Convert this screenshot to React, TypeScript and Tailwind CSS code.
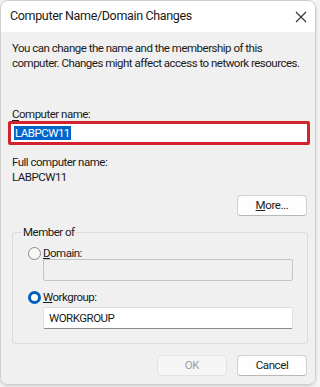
import React from 'react';

const font = { fontFamily: 'Roboto, "Liberation Sans", sans-serif' };

function Radio({ checked }: { checked?: boolean }) {
  return checked ? (
    <span className="w-[13px] h-[13px] rounded-full border-[3.5px] border-[#005fb8] bg-white shrink-0" />
  ) : (
    <span className="w-[13px] h-[13px] rounded-full border border-[#8a8a8a] bg-[#f7f7f7] shrink-0" />
  );
}

function Button({ children, disabled }: { children: React.ReactNode; disabled?: boolean }) {
  return (
    <button
      className={`w-[70px] h-[21px] rounded-[4px] border text-[11.5px] tracking-[-0.4px] leading-none flex items-center justify-center ${
        disabled
          ? 'border-[#e3e3e3] bg-[#f5f5f5] text-[#a0a0a0]'
          : 'border-[#d0d0d0] border-b-[#b8b8b8] bg-[#fdfdfd] text-[#1a1a1a]'
      }`}
    >
      {children}
    </button>
  );
}

export default function App() {
  return (
    <div className="w-[320px] h-[387px] bg-[#f4f4f4] overflow-hidden" style={font}>
      <div className="w-[316px] h-[385px] rounded-[8px] border border-[#cfcfcf] overflow-hidden flex flex-col shadow-[0_1px_3px_rgba(0,0,0,0.18)]">
        {/* Title bar */}
        <div className="h-[31px] bg-white flex items-center justify-between pl-[9px] pr-[7px] shrink-0">
          <span className="text-[12.5px] tracking-[-0.35px] text-[#1a1a1a]">Computer Name/Domain Changes</span>
          <svg width="12" height="12" viewBox="0 0 12 12" className="mr-[1px]">
            <path d="M1 1L11 11M11 1L1 11" stroke="#333" strokeWidth="1.1" />
          </svg>
        </div>

        {/* Body */}
        <div className="flex-1 bg-[#f0f0f0] pl-[11px] pr-[8px] pt-[9px] text-[11.5px] tracking-[-0.5px] leading-[15px] text-[#1a1a1a]">
          <p className="whitespace-nowrap">
            You can change the name and the membership of this
            <br />
            computer. Changes might affect access to network resources.
          </p>

          <div className="mt-[36px]">
            <span className="underline decoration-1 underline-offset-2">C</span>omputer name:
          </div>
          <div className="-ml-[4px] mt-[-1px] w-[302px] h-[24px] border-[3px] border-[#d2232e] rounded-[2px] bg-white flex items-center pl-[3px]">
            <span className="bg-[#0066cc] text-white px-[1px] leading-[14px]">LABPCW11</span>
          </div>

          <div className="mt-[10px]">Full computer name:</div>
          <div>LABPCW11</div>

          <div className="flex justify-end mt-[10px] pr-0">
            <Button>
              <span>
                <span className="underline">M</span>ore...
              </span>
            </Button>
          </div>

          <fieldset className="mt-[9px] w-[296px] h-[119px] border border-[#dcdcdc] rounded-[3px] px-[8px] pt-[6px]">
            <legend className="ml-[1px] px-[1px] leading-[15px]">Member of</legend>
            <div className="flex items-center gap-[2px] ml-[7px]">
              <Radio />
              <span>
                <span className="underline">D</span>omain:
              </span>
            </div>
            <div className="ml-[22px] mt-[-2px] w-[250px] h-[22px] border border-[#c4c4c4] bg-[#f0f0f0] rounded-[2px]" />
            <div className="flex items-center gap-[2px] ml-[7px] mt-[9px]">
              <Radio checked />
              <span>
                <span className="underline">W</span>orkgroup:
              </span>
            </div>
            <div className="ml-[22px] mt-[2px] w-[250px] h-[22px] border border-[#e0e0e0] border-b-[#8a8a8a] bg-white rounded-[2px] flex items-center pl-[5px]">
              WORKGROUP
            </div>
          </fieldset>

          <div className="flex justify-end gap-[10px] mt-[11px]">
            <Button disabled>OK</Button>
            <Button>Cancel</Button>
          </div>
        </div>
      </div>
    </div>
  );
}
